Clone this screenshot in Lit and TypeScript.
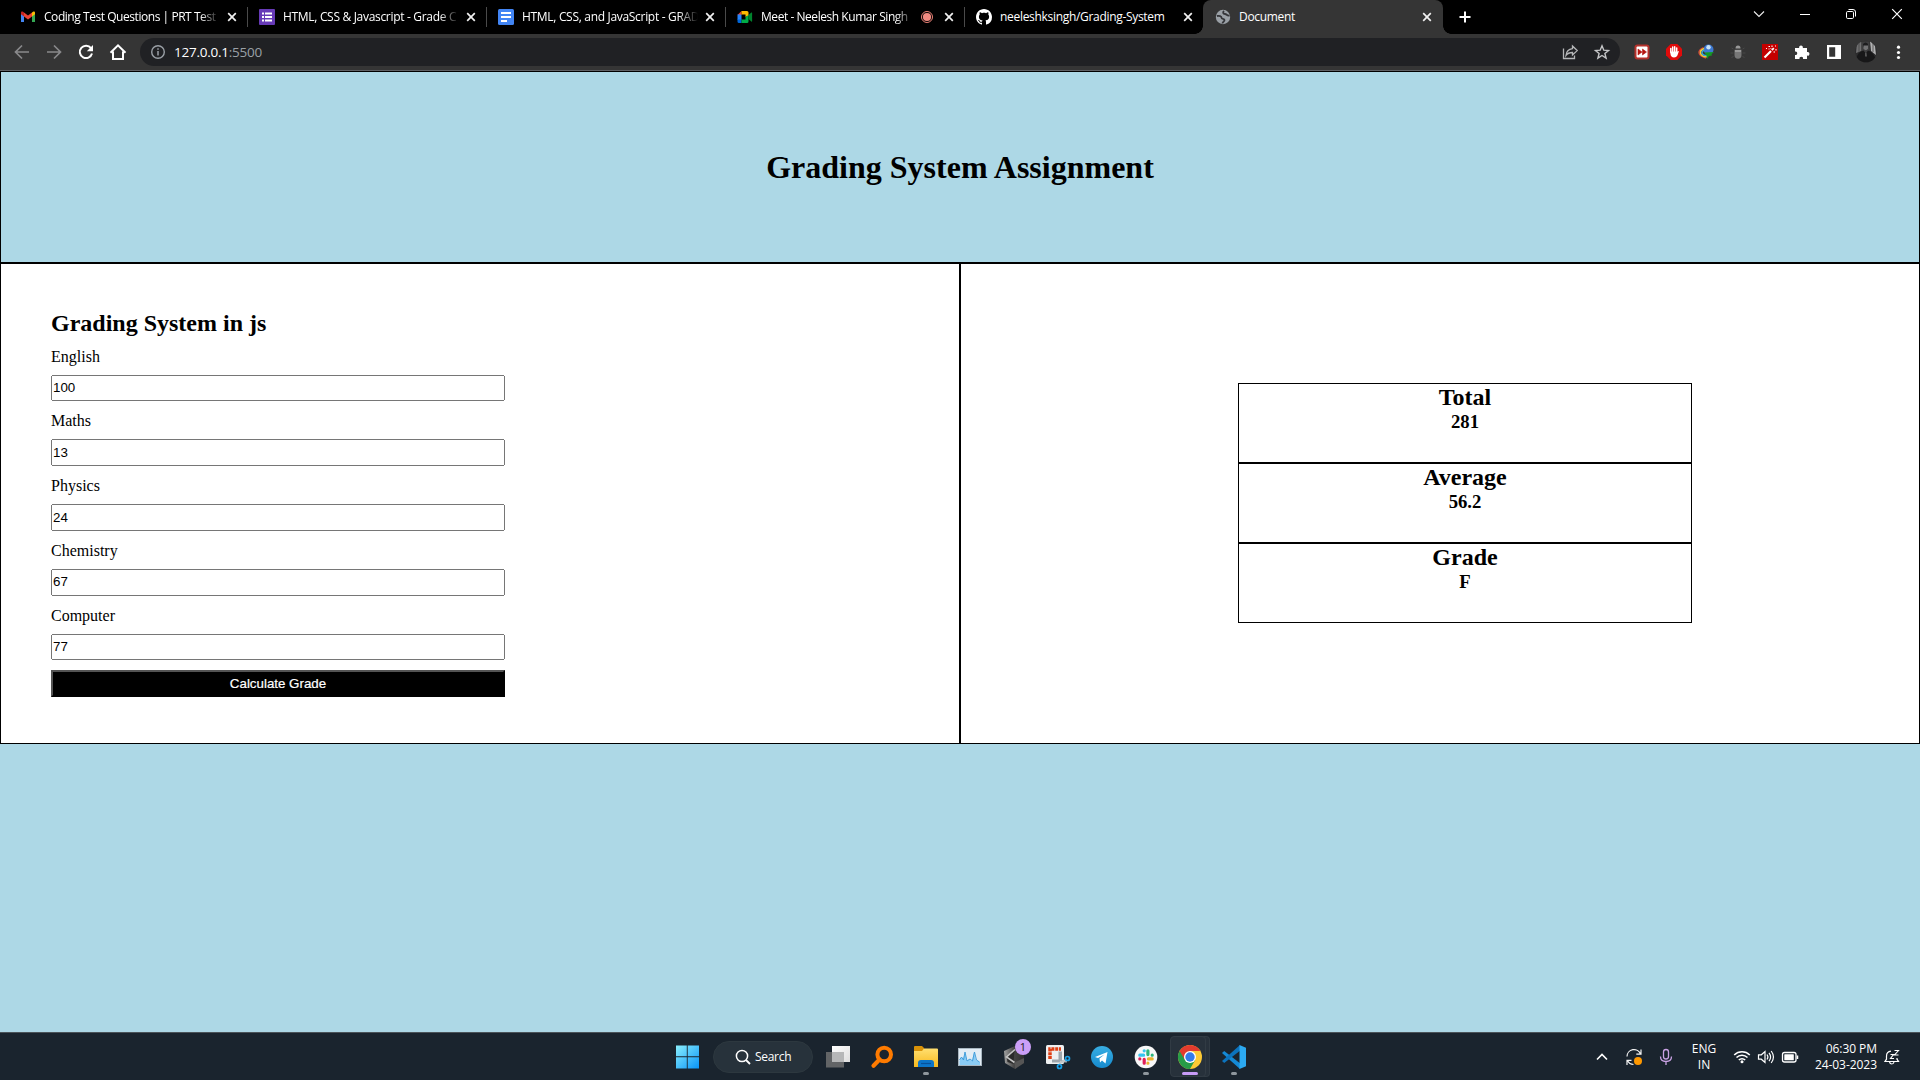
import { LitElement, html, css, svg, TemplateResult } from "lit";
import { customElement, property, state } from "lit/decorators.js";
import { classMap } from "lit/directives/class-map.js";

/* Every glyph is drawn in a 24x24 box. */
const glyphs: Record<string, TemplateResult> = {
  gmail: svg`<path d="M5 17V8.200l3 2.200V17z" fill="#4285f4"/><path d="M16 17v-6.600l3-2.200V17z" fill="#34a853"/><path d="M16 7.500l1-.8c1-.7 2 0 2 1v1.600l-3 2.300z" fill="#fbbc04"/><path d="M5 9.300V7.700c0-1 1-1.700 2-1l1 .8v4.100z" fill="#c5221f"/><path d="M8 7.500l4 3 4-3v4.100l-4 3-4-3z" fill="#ea4335"/>`,
  forms: svg`<rect x="4" y="4" width="16" height="16" rx="1" fill="#673ab7"/><path d="M7 8.500h2M7 12h2M7 15.500h2M10 8.500h7M10 12h7M10 15.500h7" stroke="#fff" stroke-width="2"/>`,
  docs: svg`<rect x="4" y="4" width="16" height="16" rx="1.500" fill="#4285f4"/><path d="M7 8h10M7 12h10M7 16h6" stroke="#fff" stroke-width="2"/>`,
  meet: svg`<path d="M4.500 10L8.500 6v4z" fill="#ea4335"/><path d="M4.500 9.500h4v5.500h-4z" fill="#2684fc"/><path d="M4.500 14.500h4V18H6q-1.500 0-1.500-1.500z" fill="#0066da"/><path d="M8.500 6H14q1.500 0 1.500 1.500V11l-3 1V9.500h-4z" fill="#ffba00"/><path d="M8.500 14.500h4V12l3-2v6.500q0 1.500-1.500 1.500H8.500z" fill="#00ac47"/><path d="M15.500 10l2.800-2.400q.8-.6.8.4v8q0 1-.8.4L15.500 14z" fill="#00832d"/>`,
  github: svg`<path transform="translate(4 4)" fill="#fff" d="M8 0C3.580 0 0 3.580 0 8c0 3.540 2.290 6.530 5.470 7.590.4.070.55-.17.55-.38 0-.19-.01-.82-.01-1.490-2.010.37-2.530-.49-2.690-.94-.09-.23-.48-.94-.82-1.130-.28-.15-.68-.52-.01-.53.63-.01 1.080.58 1.230.82.720 1.210 1.870.87 2.330.66.070-.52.28-.87.51-1.070-1.780-.2-3.640-.89-3.640-3.950 0-.87.31-1.590.82-2.150-.08-.2-.36-1.020.08-2.120 0 0 .67-.21 2.200.82.640-.18 1.320-.27 2-.27s1.360.09 2 .27c1.530-1.040 2.200-.82 2.200-.82.44 1.100.16 1.920.08 2.120.51.56.82 1.270.82 2.150 0 3.070-1.870 3.750-3.650 3.950.29.25.54.73.54 1.480 0 1.070-.01 1.930-.01 2.200 0 .21.15.46.55.38A8.010 8.010 0 0 0 16 8c0-4.420-3.580-8-8-8z"/>`,
  globe: svg`<circle cx="12" cy="12" r="7.200" fill="#9aa0a6"/><path d="M6 11c2.500-.5 4.500 0 4.500 1.800s3 .2 3 2.200-2 1.500-2 3.500M13 6c-1.500 1.500-1 3 1 3s1.500 2 4.500 1.500" stroke="#35363a" stroke-width="1.800" fill="none"/>`,
  close: svg`<path d="M8.200 8.200l7.600 7.600M15.800 8.200l-7.600 7.600" stroke="#f1f1f1" stroke-width="1.700"/>`,
  record: svg`<circle cx="12" cy="12" r="5.500" fill="none" stroke="#ee8378"/><circle cx="12" cy="12" r="4.100" fill="#f28b82"/>`,
  plus: svg`<path d="M12 6.500v11M6.500 12h11" stroke="#fff" stroke-width="2"/>`,
  wchev: svg`<path d="M7 9.500l5 5 5-5" stroke="#eee" stroke-width="1.100" fill="none"/>`,
  wmin: svg`<path d="M7 12.500h10" stroke="#fff"/>`,
  wmax: svg`<rect x="7.500" y="9.500" width="7" height="7" rx="1.200" stroke="#fff" fill="none"/><path d="M9.500 7.500H14q2.500 0 2.500 2.500v4.500" stroke="#fff" fill="none"/>`,
  wclose: svg`<path d="M7.200 7.200l9.600 9.600M16.800 7.200l-9.600 9.600" stroke="#fff" stroke-width="1.200"/>`,
  back: svg`<path d="M19 12H6M12 5.500L5.500 12l6.500 6.500" stroke="#89898b" stroke-width="1.700" fill="none"/>`,
  forward: svg`<path d="M5 12h13M12 5.500l6.500 6.500-6.500 6.500" stroke="#89898b" stroke-width="1.700" fill="none"/>`,
  reload: svg`<path d="M17 8.200A6.200 6.200 0 1 0 18 13.500" stroke="#fff" stroke-width="2" fill="none"/><path d="M19 5v6.200h-6.200z" fill="#fff"/>`,
  home: svg`<path d="M4.500 12.800L12 5.300l7.500 7.500M7 11.500v7.500h10v-7.500" stroke="#fff" stroke-width="2" fill="none"/>`,
  info: svg`<circle cx="12" cy="12" r="6.300" stroke="#9aa0a6" stroke-width="1.400" fill="none"/><path d="M12 11v4.500M12 8.200v1.500" stroke="#9aa0a6" stroke-width="1.500"/>`,
  share: svg`<path d="M5.500 8.500v10h11v-3" stroke="#b5b6b8" stroke-width="1.300" fill="none"/><path d="M14.500 6l4.700 4.600-4.700 4.400v-2.500c-3 0-5 .8-6.500 3 .3-3.700 2.500-6.300 6.500-6.800z" stroke="#b5b6b8" stroke-width="1.300" fill="none"/>`,
  star: svg`<path d="M12 5.800l1.800 4.400 4.700.3-3.600 3 1.200 4.600-4.100-2.600-4.100 2.600 1.200-4.600-3.600-3 4.700-.3z" stroke="#c4c5c7" stroke-width="1.400" fill="none"/>`,
  ext1: svg`<rect x="4.500" y="4.500" width="15" height="15" rx="3" fill="#b5312b"/><rect x="6.500" y="6.500" width="11" height="11" rx="1" fill="#fff"/><path d="M8 9l4 3-4 3zM12.500 9l4 3-4 3z" fill="#b5140f" stroke="#b5140f" stroke-width=".6"/>`,
  ext2: svg`<path d="M8.700 4h6.600L20 8.700v6.600L15.300 20H8.700L4 15.300V8.700z" fill="#e00b0b"/><path d="M8.800 12V8.500M10.700 11.500V7M12.700 11.500V6.800M14.700 12V8" stroke="#fff" stroke-width="1.500" stroke-linecap="round"/><path d="M8 11.500h7.500l1.500-.5-1.600 4.500q-1 2-3.400 2T8.800 15.500z" fill="#fff"/>`,
  ext3: svg`<circle cx="14.500" cy="9.500" r="5" fill="#3d78d0"/><circle cx="14.500" cy="7.200" r="2.200" fill="#c9e4f8"/><path d="M9.500 7.500Q4.500 9.500 5 13t7 5" stroke="#d9453c" stroke-width="1.300" fill="none"/><path d="M10 8.500Q5.500 10.500 6.500 13.500T13 16.700" stroke="#f3cf30" stroke-width="1.500" fill="none"/><path d="M10 9.800Q7 12 8.500 14t4.500 1.500" stroke="#36a6d8" stroke-width="1.500" fill="none"/><path d="M10.500 12.500l9.500-.5-2.500 2 .5 1.500-3 .5-2 3-.5-3.500z" fill="#139b22"/>`,
  ext4: svg`<path d="M7.500 9L5.500 8M7.500 13H4.500M7.500 16l-2 2M16.500 9l2-1M16.500 13h3M16.500 16l2 2" stroke="#484848"/><path d="M9.500 8.500q0-3 2.500-3t2.500 3z" fill="#9a9a9a"/><path d="M8.500 9.800h7v5q0 4-3.500 4t-3.500-4z" fill="#777"/><path d="M9 11h6" stroke="#a5a5a5" stroke-width="1.500"/>`,
  ext5: svg`<rect x="4" y="4" width="16" height="16" fill="#c40000"/><path d="M6.500 17.500l6.500-6.500" stroke="#fff" stroke-width="2.200"/><path d="M13.800 10.200l2-2" stroke="#fff" stroke-width="1.800"/><path d="M8 8.500h1M10.500 6.500h1.500M10.500 9h1M14 5.500v1.500M17 6h1M18 9v1.500M15.500 12h1.500M12.500 8.500h.8" stroke="#fff" stroke-width="1.100"/>`,
  puzzle: svg`<path d="M5 8h4.200c-1-3.500 4.600-3.500 3.600 0H17v4c3.300-1 3.300 4.600 0 3.600V19h-4c1-3-4.300-3-3.500 0H5v-4c3 .8 3-4.200 0-3.400z" fill="#fff"/>`,
  sidebar: svg`<path d="M5 5h14v14H5zM7.200 7.200v9.600h6V7.200z" fill="#fff" fill-rule="evenodd"/>`,
  avatar: svg`<clipPath id="av"><circle cx="12" cy="11.500" r="10.800"/></clipPath><g clip-path="url(#av)"><path d="M0 0h24v24H0z" fill="#2c2c2d"/><path d="M3 2h4.500v9L2 13z" fill="#707071"/><path d="M16 1l5 5 1 9-5-4z" fill="#b1b1b2"/><path d="M5 2v10M19 3v9" stroke="#444" stroke-width=".8"/><path d="M7.500 1.500h8V12h-8z" fill="#3e3e3f"/><path d="M9 4q2.700-3 5 0v3H9z" fill="#1d1d1e"/><path d="M9.500 5.500H14v3q-2.200 3.500-4.500 0z" fill="#737374"/><path d="M1 24q1-12 8.500-13.500l2.300 3 2.200-3q7 1.500 9 13.500z" fill="#171718"/><path d="M11 12.500h1.500l.5 4h-2z" fill="#555"/></g>`,
  menu: svg`<circle cx="12.500" cy="7.200" r="1.600" fill="#fff"/><circle cx="12.500" cy="12.500" r="1.600" fill="#fff"/><circle cx="12.500" cy="17.500" r="1.600" fill="#fff"/>`,

  start: svg`<linearGradient id="wn" gradientUnits="userSpaceOnUse" x1="1" y1="0" x2="24" y2="24"><stop stop-color="#8cf0fd"/><stop offset="1" stop-color="#0793f8"/></linearGradient><path d="M1 .5h10.800v10.800H1zM12.700.5H24v10.800H12.700zM1 12.200h10.800V23.500H1zM12.700 12.200H24v11.300H12.700z" fill="url(#wn)"/>`,
  search: svg`<circle cx="11" cy="11" r="5.600" stroke="#fff" stroke-width="1.500" fill="none"/><path d="M15 15l4 4" stroke="#fff" stroke-width="1.800"/>`,
  taskview: svg`<linearGradient id="tv" x1="0" y1="0" x2="1" y2="1"><stop stop-color="#fff"/><stop offset="1" stop-color="#ddd"/></linearGradient><rect x="6" y="1" width="18" height="16" fill="url(#tv)"/><rect y="7" width="18" height="15.500" fill="#626466"/><path d="M6 7h12v10H6z" fill="#b6b7b8"/>`,
  everything: svg`<circle cx="14.200" cy="9.500" r="6.800" stroke="#ff7b00" stroke-width="4" fill="none"/><path d="M9.500 14.500l-6 6.200" stroke="#ff7b00" stroke-width="4.200" stroke-linecap="round"/>`,
  folder: svg`<linearGradient id="fd" x1="0" y1="0" x2="0" y2="1"><stop stop-color="#ffdf70"/><stop offset="1" stop-color="#f8b91d"/></linearGradient><path d="M0 2q0-1 1-1h7l2 2v4H0z" fill="#d99208"/><path d="M0 6h8l2-2.500h13q1 0 1 1V22H0z" fill="url(#fd)"/><path d="M4 22v-4q0-3 3-3h10q3 0 3 3v4z" fill="#0c75c9"/><path d="M7 18.500h10" stroke="#07519a" stroke-width="1.200"/>`,
  monitor: svg`<rect x=".5" y="3.500" width="23" height="17" fill="#e3edf5" stroke="#a9b7c1"/><path d="M1.500 16l2-4 1.500 2 2-7 2 9 2-2 3 2 2-9 2 8 4 2v3h-20.500z" fill="#8accf5"/><path d="M1.500 15l2-3 2 3 1.500-8 2 9 3-2 2.500 2 2-9 2 8 3 2" stroke="#3a98d8" stroke-width=".9" fill="none"/>`,
  unity: svg`<linearGradient id="un"><stop stop-color="#a1a1a1"/><stop offset=".5" stop-color="#454545"/><stop offset="1" stop-color="#303030"/></linearGradient><path d="M2 6L13 1l9 5v12l-9 6-10-6z" fill="url(#un)"/><path d="M4.500 11l8-6-1 14-6-2z" fill="#2b2b2b"/><path d="M13 4.500l-8.500 7.500 8 5.500" stroke="#c5c5c5" stroke-width="1.600" fill="none"/><path d="M12.500 17.500l9.500-4.500v5l-9 6z" fill="#565656"/>`,
  snip: svg`<rect width="18" height="19" rx="1.500" y="0" fill="#eef0f1"/><path d="M4 14V4h11" stroke="#df3f14" stroke-width="3.500" stroke-dasharray="3 .8" fill="none"/><path d="M12.500 6.500H16V15h5v2.500h-8.500zM6 14.500h9v3H6z" fill="#9ea6ac"/><path d="M15 16l-1 4M16 16.500l4-1.500" stroke="#c5c8ca" stroke-width="2"/><circle cx="13.500" cy="21.500" r="2" stroke="#18a1e8" stroke-width="1.700" fill="none"/><circle cx="21.500" cy="13.500" r="2" stroke="#18a1e8" stroke-width="1.700" fill="none"/>`,
  telegram: svg`<linearGradient id="tg" x1="0" y1="0" x2="0" y2="1"><stop stop-color="#38aee3"/><stop offset="1" stop-color="#168acd"/></linearGradient><circle cx="12" cy="12" r="11" fill="url(#tg)"/><path d="M5 12l12.500-5-2 11.500-3.500-3-2 2-.5-4 5-4-6.500 3.500z" fill="#fff"/>`,
  slack: svg`<circle cx="12" cy="12" r="11.300" fill="#f8f8f8"/><g stroke-width="3.200" stroke-linecap="round" fill="none"><path d="M5.800 10.200h3.800M10.200 5.800h.01" stroke="#36c5f0"/><path d="M13.900 5.800v3.800M18.200 10.200h.01" stroke="#2eb67d"/><path d="M14.400 13.900h3.800M13.900 18.200h.01" stroke="#ecb22e"/><path d="M10.200 14.400v3.800M5.800 13.900h.01" stroke="#e01e5a"/></g>`,
  chrome: svg`<circle cx="12" cy="12" r="12" fill="#fcc934"/><path d="M12 12L1.600 6A12 12 0 0 0 12 24l5.200-9z" fill="#279c48"/><path d="M12 6h10.400A12 12 0 0 0 1.600 6L7 15z" fill="#e33b2e"/><circle cx="12" cy="12" r="6" fill="#fff"/><circle cx="12" cy="12" r="4.700" fill="#347bea"/>`,
  vscode: svg`<path d="M0 8l2.200-2L18 18.200V24z" fill="#1489d5"/><path d="M0 16l2.200 2L18 5.800V0z" fill="#0c73bd"/><path d="M17.500 0L24 2.800v18.400L17.500 24z" fill="#2caaf2"/>`,
  up: svg`<path d="M7 14.500L12 9.500l5 5" stroke="#fff" stroke-width="1.600" fill="none"/>`,
  sync: svg`<path d="M5 11.500a7 7 0 0 1 13.500-2.500M19 4.500v4.700h-4.700M5 20v-4.700h4.500M5.500 15.500a7 7 0 0 0 6 4" stroke="#f3f3f3" stroke-width="1.200" fill="none"/><circle cx="16" cy="16" r="4" fill="#ff9800"/>`,
  mic: svg`<rect x="9.500" y="4.500" width="5" height="9.500" rx="2.500" stroke="#c9a2e4" stroke-width="1.300" fill="none"/><path d="M6.500 11.500q0 5 5.500 5t5.500-5M12 16.500V20" stroke="#c9a2e4" stroke-width="1.300" fill="none"/>`,
  wifi: svg`<g stroke="#fff" stroke-width="1.500" fill="none"><path d="M4.200 10a11 11 0 0 1 15.600 0M6.500 12.600a7.700 7.700 0 0 1 11 0M8.800 15a4.500 4.500 0 0 1 6.400 0"/></g><circle cx="12" cy="16.800" r="1.500" fill="#fff"/>`,
  volume: svg`<path d="M4.500 9.800h2.800L11 6.500v11l-3.700-3.300H4.500z" stroke="#fff" stroke-width="1.200" fill="none"/><path d="M13 9.500q1.800 2.500 0 5M15 7.800q3.200 4.200 0 8.400M17.200 6q4.500 6 0 12" stroke="#fff" stroke-width="1.200" fill="none"/>`,
  battery: svg`<rect x="4.500" y="7.500" width="13.500" height="9.500" rx="2" stroke="#fff" stroke-width="1.300" fill="none"/><rect x="6.300" y="9.300" width="9.500" height="6" rx=".5" fill="#fff"/><path d="M19.500 10.500v3.500" stroke="#fff" stroke-width="1.500"/>`,
  bell: svg`<path d="M11 6.200c-3 .3-4.500 2.500-4.500 5v3L5 16.500h13.500L17 14.200V13M9.500 17q.5 2 2.300 2t2.200-2" stroke="#fff" stroke-width="1.200" fill="none"/><path d="M10.500 9.500h3l-3 4h3.500M14.500 5.500h4l-4 4.500h4" stroke="#fff" stroke-width="1.100" fill="none"/>`,
};

@customElement("ui-icon")
class UiIcon extends LitElement {
  @property() name = "";
  static styles = css`
    :host { display: block; width: 24px; height: 24px; flex: none; }
    .glyph { display: block; overflow: visible; }
  `;
  render() {
    return html`<svg class="glyph" width="24" height="24" viewBox="0 0 24 24">${glyphs[this.name]}</svg>`;
  }
}

@customElement("browser-chrome")
class BrowserChrome extends LitElement {
  private tabs = [
    { icon: "gmail", title: "Coding Test Questions | PRT Test", cut: true, tight: true },
    { icon: "forms", title: "HTML, CSS & Javascript - Grade C", cut: true },
    { icon: "docs", title: "HTML, CSS, and JavaScript - GRAD", cut: true },
    { icon: "meet", title: "Meet - Neelesh Kumar Singh", cut: true, rec: true, tight: true },
    { icon: "github", title: "neeleshksingh/Grading-System" },
    { icon: "globe", title: "Document", active: true },
  ];
  static styles = css`
    :host { display: block; font-family: "Open Sans", "Noto Sans", sans-serif; color: #fff; }
    .strip { height: 34px; background: #000; display: flex; padding-left: 8px; }
    .tab { box-sizing: border-box; width: 239px; height: 34px; display: flex; align-items: center; padding: 0 3px 0 8px; position: relative; font-size: 12px; letter-spacing: -0.31px; }
    .tab.line::after { content: ""; position: absolute; right: -1px; top: 7px; width: 1px; height: 20px; background: #4a4a4a; }
    .tab.active { background: #353535; border-radius: 8px 8px 0 0; width: 240px; padding-right: 4px; }
    .tab.active::before, .tab.active::after { content: ""; position: absolute; bottom: 0; width: 8px; height: 8px; }
    .tab.active::before { left: -8px; background: radial-gradient(circle at 0 0, #000 7.5px, #353535 8px); }
    .tab.active::after { right: -8px; background: radial-gradient(circle at 100% 0, #000 7.5px, #353535 8px); }
    .title { flex: 1; white-space: nowrap; overflow: hidden; margin-left: 4px; line-height: 20px; }
    .title.cut { mask-image: linear-gradient(to right, #000 calc(100% - 20px), transparent); }
    .title.tight { letter-spacing: -0.45px; }
    .rec { margin-right: -2px; }
    .plus { margin: 5px 0 0 10px; }
    .win { margin-left: auto; display: flex; height: 28px; }
    .cell { width: 46px; display: grid; place-items: center; }
    .bar { height: 36px; background: #353535; display: flex; align-items: center; padding-left: 6px; }
    .btn { width: 32px; display: grid; place-items: center; }
    .nav { display: flex; width: 134px; }
    .omni { box-sizing: border-box; width: 1480px; height: 28px; border-radius: 14px; background: #202124; display: flex; align-items: center; padding: 0 2px; }
    .url { flex: 1; font-size: 13.5px; letter-spacing: -0.25px; line-height: 20px; }
    .port { color: #9aa0a6; }
    .exts { display: flex; margin-left: 6px; }
    .edge { height: 1px; background: #5f6064; }
  `;
  render() {
    return html`
      <div class="strip">
        ${this.tabs.map(
          (t, i) => html`<div class=${classMap({ tab: true, active: !!t.active, line: i < 4 })}>
            <ui-icon name=${t.icon}></ui-icon>
            <span class=${classMap({ title: true, cut: !!t.cut, tight: !!t.tight })}>${t.title}</span>
            ${t.rec ? html`<ui-icon class="rec" name="record"></ui-icon>` : ""}
            <ui-icon name="close"></ui-icon>
          </div>`
        )}
        <ui-icon class="plus" name="plus"></ui-icon>
        <div class="win">
          ${["wchev", "wmin", "wmax", "wclose"].map((n) => html`<div class="cell"><ui-icon name=${n}></ui-icon></div>`)}
        </div>
      </div>
      <div class="bar">
        <div class="nav">
          ${["back", "forward", "reload", "home"].map((n) => html`<div class="btn"><ui-icon name=${n}></ui-icon></div>`)}
        </div>
        <div class="omni">
          <div class="btn"><ui-icon name="info"></ui-icon></div>
          <div class="url">127.0.0.1<span class="port">:5500</span></div>
          <div class="btn"><ui-icon name="share"></ui-icon></div>
          <div class="btn"><ui-icon name="star"></ui-icon></div>
        </div>
        <div class="exts">
          ${["ext1", "ext2", "ext3", "ext4", "ext5", "puzzle", "sidebar", "avatar", "menu"].map(
            (n) => html`<div class="btn"><ui-icon name=${n}></ui-icon></div>`
          )}
        </div>
      </div>
      <div class="edge"></div>
    `;
  }
}

@customElement("grading-page")
class GradingPage extends LitElement {
  @state() private marks = [
    { subject: "English", value: 100 },
    { subject: "Maths", value: 13 },
    { subject: "Physics", value: 24 },
    { subject: "Chemistry", value: 67 },
    { subject: "Computer", value: 77 },
  ];
  @state() private results = [
    { name: "Total", value: "281" },
    { name: "Average", value: "56.2" },
    { name: "Grade", value: "F" },
  ];
  static styles = css`
    :host { display: block; background: #add8e6; font-family: "Liberation Serif", serif; font-size: 16px; color: #000; }
    .head { box-sizing: border-box; height: 192px; border: 1px solid #000; padding-top: 1px; display: grid; place-items: center; }
    .h1, .h2, .h3 { margin: 0; font-weight: bold; }
    .h1 { font-size: 32px; }
    .h2 { font-size: 24px; line-height: 27px; }
    .h3 { font-size: 18.72px; line-height: 21px; }
    .cols { display: grid; grid-template-columns: 1fr 1fr; height: 481px; }
    .col { box-sizing: border-box; border: 1px solid #000; background: #fff; display: flex; flex-direction: column; justify-content: center; }
    .form { padding-left: 50px; gap: 10px; }
    .label { height: 18px; line-height: 19.5px; }
    .field, .calc { box-sizing: border-box; width: 454px; font-family: "Liberation Sans", Arial, sans-serif; font-size: 13.333px; }
    .field { height: 26.75px; margin: 0; padding: 1px 0 2px; }
    .calc { height: 27px; background: #000; color: #fff; border: 2px outset #000; padding: 0; -webkit-text-stroke: 0.2px #fff; }
    .out { padding: 0 0 1px 277px; }
    .box { box-sizing: border-box; width: 454px; height: 80px; border: 1px solid #000; text-align: center; }
  `;
  render() {
    return html`
      <div class="head"><h1 class="h1">Grading System Assignment</h1></div>
      <div class="cols">
        <div class="col form">
          <h2 class="h2">Grading System in js</h2>
          ${this.marks.map(
            (m) => html`<label class="label">${m.subject}</label><input class="field" type="text" .value=${String(m.value)} />`
          )}
          <button class="calc">Calculate Grade</button>
        </div>
        <div class="col out">
          ${this.results.map(
            (r) => html`<div class="box"><h2 class="h2">${r.name}</h2><h3 class="h3">${r.value}</h3></div>`
          )}
        </div>
      </div>
    `;
  }
}

@customElement("task-bar")
class TaskBar extends LitElement {
  private apps = [
    { icon: "taskview" },
    { icon: "everything" },
    { icon: "folder", run: true },
    { icon: "monitor" },
    { icon: "unity", badge: "1" },
    { icon: "snip" },
    { icon: "telegram" },
    { icon: "slack", run: true },
    { icon: "chrome", focus: true },
    { icon: "vscode", run: true },
  ];
  static styles = css`
    :host { box-sizing: border-box; display: flex; align-items: center; height: 48px; background: #1a242e; border-top: 1px solid #4b5359; padding: 0 16px 0 665px; font-family: "Open Sans", "Noto Sans", sans-serif; font-size: 12px; color: #fff; }
    .app { width: 44px; height: 47px; display: grid; place-items: center; position: relative; }
    .pill { box-sizing: border-box; width: 100px; height: 32px; margin: 0 3px 0 4px; border-radius: 16px; background: #27323b; border: 1px solid #2d383f; display: flex; align-items: center; padding-left: 17px; }
    .word { letter-spacing: -0.3px; }
    .run::after, .focus::after { content: ""; position: absolute; bottom: 5px; height: 3px; border-radius: 2px; }
    .run::after { width: 6px; left: 19px; background: #8f979d; }
    .focus::after { width: 16px; left: 14px; background: #c79bf8; }
    .focus::before { content: ""; box-sizing: border-box; position: absolute; left: 2px; top: 3px; width: 36px; height: 41px; border-radius: 4px; background: #27313b; border: 1px solid #313b44; box-shadow: 4px 0 0 -1px #27313b, 4px 0 0 0 #313b44; }
    .app ui-icon { position: relative; }
    .badge { position: absolute; left: 23px; top: 6px; width: 16px; height: 16px; border-radius: 8px; background: #cb9ff8; color: #1b1b1b; font-size: 11px; line-height: 16px; text-align: center; }
    .tray { margin-left: auto; display: flex; align-items: center; }
    .t { width: 32px; display: grid; place-items: center; }
    .two { line-height: 16px; }
    .lang { width: 44px; text-align: center; margin-right: 4px; }
    .clock { width: 75px; text-align: right; margin-right: 3px; white-space: nowrap; letter-spacing: -0.05px; }
  `;
  render() {
    return html`
      <div class="app"><ui-icon name="start"></ui-icon></div>
      <div class="pill"><ui-icon name="search"></ui-icon><span class="word">Search</span></div>
      ${this.apps.map(
        (a) => html`<div class=${classMap({ app: true, run: !!a.run, focus: !!a.focus })}>
          <ui-icon name=${a.icon}></ui-icon>${a.badge ? html`<span class="badge">${a.badge}</span>` : ""}
        </div>`
      )}
      <div class="tray">
        ${["up", "sync", "mic"].map((n) => html`<div class="t"><ui-icon name=${n}></ui-icon></div>`)}
        <div class="two lang">ENG<br />IN</div>
        <ui-icon name="wifi"></ui-icon><ui-icon name="volume"></ui-icon><ui-icon name="battery"></ui-icon>
        <div class="two clock">06:30 PM<br />24-03-2023</div>
        <ui-icon name="bell"></ui-icon>
      </div>
    `;
  }
}

@customElement("app-root")
class AppRoot extends LitElement {
  static styles = css`
    :host { display: flex; flex-direction: column; width: 1920px; height: 1080px; overflow: hidden; }
    .page { flex: 1; }
  `;
  render() {
    return html`<browser-chrome></browser-chrome><grading-page class="page"></grading-page><task-bar></task-bar>`;
  }
}
